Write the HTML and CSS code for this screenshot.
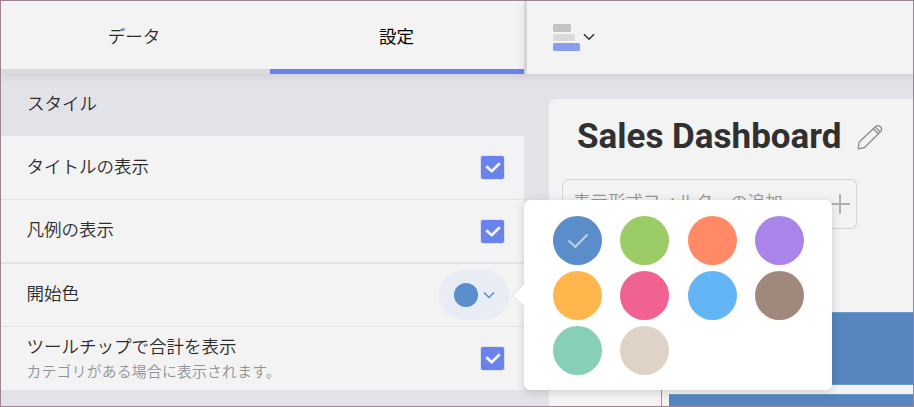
FILE: index.html
```html
<!DOCTYPE html>
<html lang="ja">
<head>
<meta charset="utf-8">
<title>Sales Dashboard</title>
<link rel="stylesheet" href="styles.css">
</head>
<body>
<div class="app">
  <aside class="side">
    <nav class="tabs">
      <div class="tab"><span>データ</span></div>
      <div class="tab active"><span>設定</span></div>
    </nav>
    <h2 class="section">スタイル</h2>
    <div class="row first">
      <span class="label">タイトルの表示</span>
      <span class="check"><svg viewBox="0 0 24 24"><path d="M5.500 10.700l5.700 5.200 8.400-8.400"/></svg></span>
    </div>
    <div class="row second">
      <span class="label">凡例の表示</span>
      <span class="check"><svg viewBox="0 0 24 24"><path d="M5.500 10.700l5.700 5.200 8.400-8.400"/></svg></span>
    </div>
    <div class="row third">
      <span class="label">開始色</span>
      <span class="picker">
        <i class="dot"></i>
        <svg width="12" height="8" viewBox="0 0 12 8"><path d="M1 1.500l5 5 5-5"/></svg>
      </span>
      <div class="popover">
        <svg class="arrow" width="13" height="24" viewBox="0 0 13 24"><path class="fill" d="M13 0.500L.5 12 13 23.500z"/><path class="edge" d="M12 1L.5 12 12 23"/></svg>
        <div class="swatches">
          <i class="blue"><svg width="22" height="16" viewBox="0 0 22 16"><path d="M1.500 7.500l6.800 6.300L20.500 1.500"/></svg></i>
          <i class="green"></i><i class="orange"></i><i class="purple"></i>
          <i class="amber"></i><i class="pink"></i><i class="sky"></i><i class="brown"></i>
          <i class="mint"></i><i class="sand"></i>
        </div>
      </div>
    </div>
    <div class="row fourth">
      <span class="label">ツールチップで合計を表示<small>カテゴリがある場合に表示されます。</small></span>
      <span class="check"><svg viewBox="0 0 24 24"><path d="M5.500 10.700l5.700 5.200 8.400-8.400"/></svg></span>
    </div>
  </aside>
  <main class="main">
    <header class="toolbar">
      <svg width="27" height="27" viewBox="0 0 27 27"><rect width="18" height="8" rx="1.500" fill="#c3c3c3"/><rect y="10" width="22" height="7" rx="1.500" fill="#dadada"/><rect y="19" width="27" height="8" rx="1.500" fill="#8a9df0"/></svg>
      <svg class="chev" width="12" height="8" viewBox="0 0 12 8"><path d="M1 1.200l5 5 5-5"/></svg>
    </header>
    <section class="card">
      <div class="heading">
        <h1>Sales Dashboard</h1>
        <svg width="26" height="26" viewBox="0 0 26 26"><path d="M1.200 24.800l1-6.800L19 2.300a2.600 2.600 0 0 1 3.700 0l1.200 1.200a2.600 2.600 0 0 1 0 3.700L7.500 23.500zM16.300 4.800l5 5M18.200 3l5 5"/></svg>
      </div>
      <div class="filter"><span>表示形式フィルターの追加</span><svg width="20" height="20" viewBox="0 0 20 20"><path d="M0 10h20M10 0v20"/></svg></div>
      <div class="chart"><div class="bar"></div><div class="bar"></div></div>
    </section>
  </main>
</div>
</body>
</html>
```
FILE: styles.css
```css
* { box-sizing: border-box; }
body {
  margin: 0;
  font: 350 17.5px/26px "Noto Sans CJK JP", sans-serif;
  color: #2c2c2c;
}
svg { display: block; fill: none; flex: none; }
.app {
  display: flex;
  width: 914px;
  height: 407px;
  border: 1px solid #9c8494;
  background: #e2e3e8;
  overflow: hidden;
}
.side { width: 523px; flex: none; }
.tabs {
  display: flex;
  height: 73px;
  background: #f3f3f3;
  box-shadow: 0 2px 8px rgba(0, 0, 0, .1);
}
.tab {
  width: 269px;
  padding: 0 3px 1px 0;
  display: flex;
  align-items: center;
  justify-content: center;
  border-bottom: 5px solid #dadada;
}
.tab span { padding-top: 3px; }
.tab.active {
  width: 254px;
  padding-right: 1px;
  border-color: #6a82eb;
  color: #000;
  font-weight: 400;
}
.section {
  margin: 0;
  height: 62px;
  padding: 16px 26px;
  font-size: 17.5px;
  font-weight: 350;
}
.row {
  position: relative;
  display: flex;
  align-items: center;
  justify-content: space-between;
  height: 64px;
  padding: 0 20px 0 25.5px;
  background: #f3f3f3;
  border-bottom: 1px solid #e2e2e8;
}
.row .label { padding-bottom: 4px; }
.row.second { border-bottom-width: 2px; }
.row.third { height: 63px; padding-right: 15px; }
.row.fourth { border-bottom: 0; height: 63px; }
.row.fourth .label { padding: 0 0 1px; }
small {
  display: block;
  font-size: 14.8px;
  line-height: 24px;
  letter-spacing: .25px;
  color: #929292;
}
.check {
  width: 23px;
  height: 23px;
  border-radius: 2px;
  background: #6a82eb;
  box-shadow: 0 0 0 1px #dde1f3;
}
.check svg { width: 23px; height: 23px; }
.check path { stroke: #f6f6f6; stroke-width: 2.8; }
.picker {
  display: flex;
  align-items: center;
  gap: 5px;
  width: 70px;
  height: 50px;
  padding-left: 15px;
  border-radius: 25px;
  background: #e8ecf4;
}
.picker path { stroke: #5a8dc9; stroke-width: 1.5; }
.dot {
  width: 24px;
  height: 24px;
  border-radius: 50%;
  background: #5a8dc9;
}
.popover {
  position: absolute;
  z-index: 2;
  left: 523px;
  top: -64px;
  width: 308px;
  height: 190px;
  padding: 16px 28px 16px 29px;
  border-radius: 6px;
  background: #fff;
  box-shadow: 0 2px 10px rgba(0, 0, 0, .16);
}
.arrow { position: absolute; left: -12px; top: 83px; }
.arrow .fill { fill: #fff; }
.arrow .edge { stroke: #dedede; }
.swatches {
  display: grid;
  grid-template-columns: repeat(4, 49px);
  justify-content: space-between;
  row-gap: 6px;
}
.swatches i {
  display: grid;
  place-items: center;
  height: 49px;
  border-radius: 50%;
}
.swatches path { stroke: #bdd1e9; stroke-width: 2; }
.blue { background: #5a8dc9; }
.green { background: #9ccc65; }
.orange { background: #ff8a65; }
.purple { background: #a985e9; }
.amber { background: #ffb74d; }
.pink { background: #f06292; }
.sky { background: #64b5f6; }
.brown { background: #a1887d; }
.mint { background: #88d0b5; }
.sand { background: #ddd3c7; }
.main { flex: 1; min-width: 0; }
.toolbar {
  display: flex;
  align-items: center;
  gap: 3px;
  height: 73px;
  padding-left: 26px;
  border-left: 3px solid #d6d6d6;
  background: #f3f3f3;
  box-shadow: 0 2px 8px rgba(0, 0, 0, .1);
}
.chev { margin-top: -2px; }
.chev path { stroke: #333; stroke-width: 1.6; }
.card {
  height: 310px;
  margin: 25px 0 0 25px;
  padding: 16px 0 0 13px;
  border-top-left-radius: 6px;
  background: #f3f3f3;
}
.heading {
  display: flex;
  align-items: center;
  gap: 15px;
  height: 44px;
  padding-left: 15px;
}
.heading path { stroke: #8c8c8c; stroke-width: 1.3; stroke-linejoin: round; }
h1 {
  margin: 0;
  width: 265px;
  font: 700 35px/42px Roboto, sans-serif;
  white-space: nowrap;
  color: #303030;
}
.filter {
  display: flex;
  align-items: center;
  justify-content: space-between;
  width: 295px;
  height: 50px;
  margin-top: 20px;
  padding: 0 6px 0 10px;
  border: 1px solid #d3d3d3;
  border-radius: 6px;
  color: #969696;
}
.filter span { padding-bottom: 7px; }
.filter path { stroke: #b0b0b0; stroke-width: 2; }
.chart {
  display: flex;
  flex-direction: column;
  gap: 9px;
  height: 110px;
  margin: 83px 0 0 99px;
  padding-left: 7px;
  border-left: 1px solid #999;
}
.bar {
  flex: none;
  height: 73px;
  background: #5685bf;
  border: solid #6b9bcc;
  border-width: 1px 0;
}
```
